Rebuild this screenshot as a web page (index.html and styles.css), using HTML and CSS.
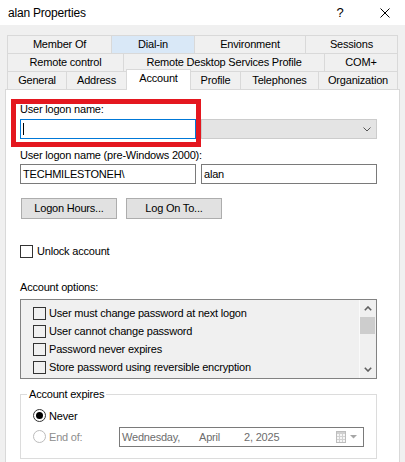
FILE: index.html
```html
<!DOCTYPE html>
<html>
<head>
<meta charset="utf-8">
<link rel="stylesheet" href="styles.css">
</head>
<body>
<div class="titlebar">
  <span class="title">alan Properties</span>
  <span class="help">?</span>
  <span class="close"><svg width="10" height="10" viewBox="0 0 10 10"><path d="M0.5 0.5 L9.5 9.5 M9.5 0.5 L0.5 9.5" stroke="#000" stroke-width="1" fill="none"/></svg></span>
</div>
<div class="content">
  <div class="tabs">
    <div class="tabrow">
      <div class="tab t104">Member Of</div>
      <div class="tab t83 hot">Dial-in</div>
      <div class="tab t111">Environment</div>
      <div class="tab t93">Sessions</div>
    </div>
    <div class="tabrow">
      <div class="tab t116">Remote control</div>
      <div class="tab t201">Remote Desktop Services Profile</div>
      <div class="tab t74">COM+</div>
    </div>
    <div class="tabrow">
      <div class="tab t59">General</div>
      <div class="tab t60">Address</div>
      <div class="tab t65 active">Account</div>
      <div class="tab t50">Profile</div>
      <div class="tab t78">Telephones</div>
      <div class="tab t80">Organization</div>
    </div>
  </div>
  <div class="panel">
    <div class="logon-row">
      <div class="highlight">
        <div class="label-tight">User logon name:</div>
        <div class="field focus"><span class="caret"></span></div>
      </div>
      <div class="combo"><svg width="8" height="5" viewBox="0 0 8 5"><polyline points="0.5,0.5 4,4 7.5,0.5" stroke="#555" stroke-width="1" fill="none"/></svg></div>
    </div>
    <div class="label-pre">User logon name (pre-Windows 2000):</div>
    <div class="pair-row">
      <div class="field">TECHMILESTONEH\</div>
      <div class="field">alan</div>
    </div>
    <div class="btn-row">
      <div class="btn">Logon Hours...</div>
      <div class="btn">Log On To...</div>
    </div>
    <div class="check-row unlock">
      <span class="cb"></span><span class="cb-label">Unlock account</span>
    </div>
    <div class="label-options">Account options:</div>
    <div class="listbox">
      <div class="items">
        <div class="item"><span class="cb list"></span><span class="cb-label">User must change password at next logon</span></div>
        <div class="item"><span class="cb list"></span><span class="cb-label">User cannot change password</span></div>
        <div class="item"><span class="cb list"></span><span class="cb-label">Password never expires</span></div>
        <div class="item"><span class="cb list"></span><span class="cb-label">Store password using reversible encryption</span></div>
      </div>
      <div class="scrollbar">
        <div class="sb-btn"><svg width="8" height="5" viewBox="0 0 8 5"><polyline points="0.8,4.2 4,1 7.2,4.2" stroke="#606060" stroke-width="1.6" fill="none"/></svg></div>
        <div class="thumb"></div>
        <div class="sb-space"></div>
        <div class="sb-btn"><svg width="8" height="5" viewBox="0 0 8 5"><polyline points="0.8,0.8 4,4 7.2,0.8" stroke="#606060" stroke-width="1.6" fill="none"/></svg></div>
      </div>
    </div>
    <fieldset class="group">
      <legend>Account expires</legend>
      <div class="radio-row">
        <span class="radio on"><span class="dot"></span></span><span class="radio-label">Never</span>
      </div>
      <div class="radio-row">
        <span class="radio off"></span><span class="radio-label end">End of:</span>
        <div class="datebox">
          <span class="d1">Wednesday,</span><span class="d2">April</span><span class="d3">2, 2025</span>
          <svg class="cal" width="10" height="12" viewBox="0 0 10 12"><rect x="0.5" y="0.5" width="9" height="11" fill="#f6f6f6" stroke="#bdbdbd"/><rect x="1" y="1" width="8" height="2" fill="#d0d0d0"/><path d="M3.5 3 V11 M6.5 3 V11 M1 5.5 H9 M1 8.5 H9" stroke="#d2d2d2" stroke-width="1"/></svg>
          <svg class="tri" width="7" height="4" viewBox="0 0 7 4"><polygon points="0,0 7,0 3.5,3.5" fill="#a6a6a6"/></svg>
        </div>
      </div>
    </fieldset>
  </div>
</div>
</body>
</html>
```

FILE: styles.css
```css
* { box-sizing: border-box; }
html, body { margin: 0; padding: 0; }
body {
  width: 405px;
  height: 462px;
  overflow: hidden;
  background: #f0f0f0;
  font-family: "Liberation Sans", Arial, sans-serif;
  font-size: 11px;
  letter-spacing: -0.2px;
  color: #000;
}
.titlebar {
  height: 25px;
  background: #fff;
  display: flex;
  align-items: center;
  padding-left: 8px;
}
.title { flex: 1; font-size: 12px; }
.help { width: 10px; text-align: center; font-size: 13px; margin-right: 35px; }
.close { width: 10px; height: 10px; margin-right: 15px; display: flex; }
.content { padding: 10px 0 0 5px; }
.tabs { margin-left: 2px; width: 391px; }
.tabrow { display: flex; height: 18px; }
.tab {
  height: 18px;
  border: 1px solid #d9d9d9;
  border-right: none;
  border-bottom: none;
  background: #f0f0f0;
  text-align: center;
  line-height: 17px;
  white-space: nowrap;
  flex: none;
}
.tab:last-child { border-right: 1px solid #d9d9d9; }
.tab.hot { background: #d9e8f7; }
.tab.active {
  background: #fff;
  height: 21px;
  margin-top: -2px;
  margin-right: -1px;
  border-right: 1px solid #d9d9d9;
  z-index: 1;
}
.t50 { width: 50px; } .t59 { width: 59px; } .t60 { width: 60px; } .t65 { width: 65px; }
.t74 { width: 74px; } .t78 { width: 78px; } .t80 { width: 80px; } .t83 { width: 83px; }
.t93 { width: 93px; } .t104 { width: 104px; } .t111 { width: 111px; } .t116 { width: 116px; }
.t201 { width: 201px; }
.panel {
  width: 395px;
  height: 380px;
  background: #fff;
  border: 1px solid #d9d9d9;
  padding: 9px 22px 0 14px;
}
.logon-row { display: flex; }
.highlight {
  margin-left: -9px;
  width: 190px;
  border: 5px solid #e4171f;
  padding: 0 0 3px 4px;
}
.label-tight { line-height: 11px; margin-bottom: 4px; white-space: nowrap; }
.field {
  width: 176px;
  height: 20px;
  border: 1px solid #7a7a7a;
  background: #fff;
  padding-left: 2px;
  line-height: 18px;
  white-space: nowrap;
}
.field.focus { border-color: #0078d7; display: flex; align-items: center; padding-left: 2px; }
.caret { width: 1px; height: 12px; background: #000; display: block; }
.combo {
  width: 176px;
  height: 20px;
  align-self: flex-end;
  margin-bottom: 8px;
  border: 1px solid #cccccc;
  background: #e4e4e4;
  display: flex;
  justify-content: flex-end;
  align-items: center;
  padding-right: 5px;
}
.label-pre { line-height: 11px; margin: 3px 0 3px; white-space: nowrap; }
.pair-row { display: flex; gap: 5px; }
.btn-row { display: flex; gap: 9px; margin-top: 14px; padding-left: 1px; }
.btn {
  width: 96px;
  height: 21px;
  border: 1px solid #adadad;
  background: #e1e1e1;
  text-align: center;
  line-height: 19px;
}
.check-row { display: flex; align-items: center; height: 13px; line-height: 13px; }
.unlock { margin-top: 26px; }
.cb { width: 13px; height: 13px; border: 1px solid #333; background: #fff; flex: none; }
.cb.list { background: transparent; }
.cb-label { margin-left: 3px; white-space: nowrap; }
.unlock .cb-label { margin-left: 4px; }
.label-options { margin-top: 22px; line-height: 15px; }
.listbox {
  margin-top: 4px;
  width: 357px;
  height: 80px;
  border: 1px solid #828282;
  background: #f0f0f0;
  display: flex;
}
.items { flex: 1; padding: 4px 0 0 12px; }
.item { height: 18px; display: flex; align-items: center; }
.scrollbar {
  width: 17px;
  display: flex;
  flex-direction: column;
  border-left: 1px solid #fafafa;
  background: #f0f0f0;
}
.sb-btn { height: 17px; display: flex; align-items: center; justify-content: center; }
.thumb { height: 17px; margin: 0 1px 0 0; background: #cdcdcd; }
.sb-space { flex: 1; }
.group {
  margin: 8px 0 0 0;
  width: 357px;
  border: 1px solid #dcdcdc;
  padding: 0 0 11px 12px;
}
.group legend { padding: 0 2px; margin-left: -6px; line-height: 15px; }
.radio-row { display: flex; align-items: center; height: 21px; }
.radio-row:first-of-type { margin-top: 3px; }
.radio {
  width: 13px;
  height: 13px;
  border-radius: 50%;
  border: 1px solid #333;
  background: #fff;
  display: flex;
  align-items: center;
  justify-content: center;
  flex: none;
}
.radio.off { border-color: #bcbcbc; }
.dot { width: 7px; height: 7px; border-radius: 50%; background: #000; }
.radio-label { margin-left: 3px; white-space: nowrap; }
.radio-label.end { width: 70px; color: #8d8d8d; }
.datebox {
  width: 245px;
  height: 20px;
  border: 1px solid #7a7a7a;
  background: #fff;
  display: flex;
  align-items: center;
  padding-left: 2px;
  color: #6d6d6d;
  white-space: nowrap;
}
.d1 { width: 77px; }
.d2 { width: 45px; }
.d3 { flex: 1; }
.cal { margin-right: 4px; }
.tri { margin-right: 6px; }
```
